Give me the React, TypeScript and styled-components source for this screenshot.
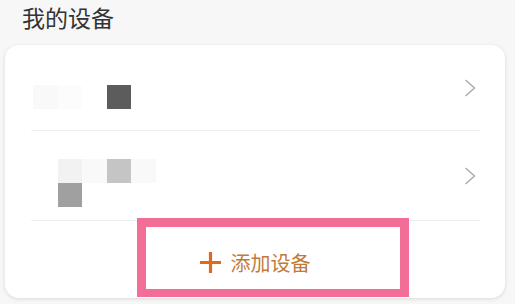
import styled, { createGlobalStyle } from "styled-components";

const GlobalStyle = createGlobalStyle`
  html, body {
    margin: 0;
    padding: 0;
    background: #f7f7f7;
    font-family: "Noto Sans CJK SC", "Noto Sans", sans-serif;
  }
`;

const Page = styled.div`
  width: 515px;
  height: 304px;
  overflow: hidden;
  background: #f7f7f7;
`;

const Title = styled.h1`
  margin: 0;
  padding-left: 22px;
  height: 45px;
  line-height: 35px;
  font-size: 23px;
  font-weight: 400;
  color: #333;
`;

const Card = styled.div`
  position: relative;
  margin: 0 10px 0 5px;
  height: 253px;
  background: #fff;
  border-radius: 14px;
  box-shadow: 0 1px 4px rgba(0, 0, 0, 0.12);
  display: flex;
  flex-direction: column;
`;

const Item = styled.div<{ $h: number }>`
  display: flex;
  align-items: center;
  height: ${(p) => p.$h}px;
  margin: 0 25px 0 26px;
  padding: 0 4px 0 2px;
  border-bottom: 1px solid #efefef;
`;

const Mosaic = styled.div<{ $offset: number }>`
  display: grid;
  grid-template-columns: repeat(5, 24.5px);
  grid-auto-rows: 24px;
  margin-top: ${(p) => p.$offset}px;
`;

const Cell = styled.div<{ $c: string }>`
  background: ${(p) => p.$c};
`;

const Chevron = styled.svg`
  margin-left: auto;
  width: 12px;
  height: 18px;
`;

const AddRow = styled.div`
  flex: 1;
  display: flex;
  align-items: center;
  justify-content: center;
  gap: 10px;
  padding-top: 5px;
  color: #c27a3a;
  font-size: 20px;
`;

const Highlight = styled.div`
  position: absolute;
  left: 132px;
  top: 173px;
  width: 254px;
  height: 62px;
  border: 9px solid #f26e96;
  border-bottom-width: 8px;
  pointer-events: none;
`;

const rows = [
  {
    h: 85,
    offset: 18,
    cells: ["#f9f9f9", "#fcfcfc", "#fff", "#5c5c5c", "#fff"],
  },
  {
    h: 89,
    offset: 14,
    cells: [
      "#fff", "#f2f2f2", "#f9f9f9", "#c5c5c5", "#f9f9f9",
      "#fff", "#a0a0a0", "#fff", "#fff", "#fff",
    ],
  },
];

function Arrow() {
  return (
    <Chevron viewBox="0 0 12 18">
      <path d="M1.5 1 L10.5 9 L1.5 17" fill="none" stroke="#a8a8a8" strokeWidth="1.4" />
    </Chevron>
  );
}

export default function App() {
  return (
    <Page>
      <GlobalStyle />
      <Title>我的设备</Title>
      <Card>
        {rows.map((r, i) => (
          <Item key={i} $h={r.h}>
            <Mosaic $offset={r.offset}>
              {r.cells.map((c, j) => (
                <Cell key={j} $c={c} />
              ))}
            </Mosaic>
            <Arrow />
          </Item>
        ))}
        <AddRow>
          <svg width="21" height="21" viewBox="0 0 21 21">
            <path d="M10.5 0 V21 M0 10.5 H21" stroke="#e2691c" strokeWidth="3.2" />
          </svg>
          <span>添加设备</span>
        </AddRow>
        <Highlight />
      </Card>
    </Page>
  );
}
